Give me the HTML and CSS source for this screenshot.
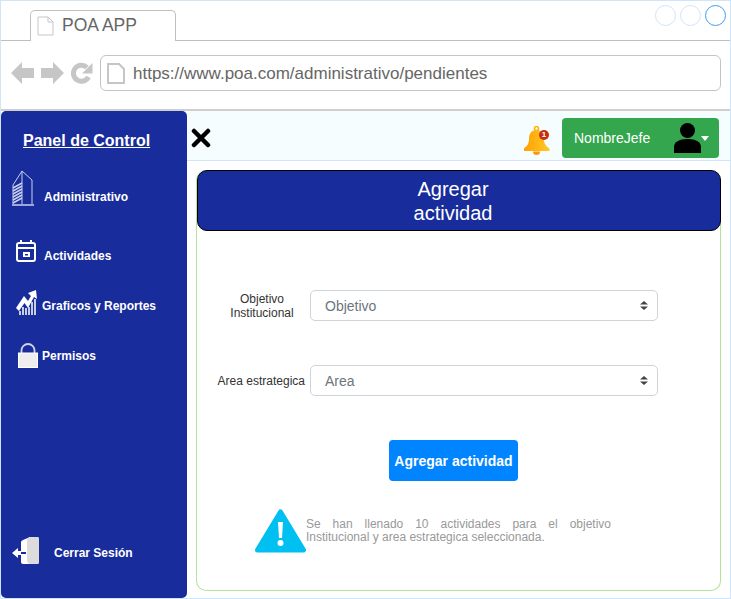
FILE: index.html
```html
<!DOCTYPE html>
<html lang="en">
<head>
    <meta charset="UTF-8">
    <meta name="viewport" content="width=device-width, initial-scale=1.0">
    <link rel="stylesheet" href="styles.css">
    <title>POA APP</title>
</head>
<body>
    <div class="window">
        <!-- Browser frame -->
        <div class="tab-strip">
            <div class="tab">
                <svg class="doc-icon" width="17" height="20" viewBox="0 0 17 20"><path d="M1 1H11L16 6V19H1Z M11 1V6H16" fill="#fff" stroke="#c6c6c6" stroke-width="1"/></svg>
                <span>POA APP</span>
            </div>
            <div class="circles">
                <span class="circle"></span>
                <span class="circle"></span>
                <span class="circle active"></span>
            </div>
        </div>
        <div class="address-row">
            <div class="nav-icons">
                <svg width="23" height="24" viewBox="0 0 23 24"><path d="M0 12L11 1V7H23V17H11V23Z" fill="#c6c6c6"/></svg>
                <svg width="23" height="24" viewBox="0 0 23 24"><path d="M23 12L12 1V7H0V17H12V23Z" fill="#c6c6c6"/></svg>
                <svg width="22" height="22" viewBox="0 0 22 22"><path d="M17.500 15A8 8 0 1 1 16 5.500" fill="none" stroke="#c6c6c6" stroke-width="5"/><path d="M21.500 1V11.500H11Z" fill="#c6c6c6"/></svg>
            </div>
            <div class="address-box">
                <svg width="18" height="21" viewBox="0 0 18 21"><path d="M1 1H12L17 6V20H1Z" fill="#fff" stroke="#c6c6c6" stroke-width="2"/></svg>
                <span>https://www.poa.com/administrativo/pendientes</span>
            </div>
        </div>

        <div class="app">
            <!-- Side menu -->
            <div class="sidebar">
                <div class="panel-title">Panel de Control</div>
                <div class="menu-item item-admin">
                    <svg width="24" height="36" viewBox="0 0 24 36" fill="none" stroke="#c9d0ee" stroke-width="1">
                        <path d="M2 15L11 1L21 10V34"/>
                        <path d="M2 15V34M11 1V34"/>
                        <path d="M2 18L11 13M2 21L11 16M2 24L11 19M2 27L11 22M2 30L11 25M2 33L11 28" stroke-width="1.500"/>
                        <path d="M1 35H23" stroke-width="1.500"/>
                    </svg>
                    <span>Administrativo</span>
                </div>
                <div class="menu-item item-activities">
                    <svg width="22" height="23" viewBox="0 0 22 23" fill="none" stroke="#fff" stroke-width="2">
                        <rect x="2" y="3" width="18" height="18" rx="2"/>
                        <path d="M2 8H20M6 0V4M16 0V4"/>
                        <rect x="8" y="12" width="7" height="5" fill="#fff" stroke="none"/>
                        <rect x="10" y="14" width="3" height="1.500" fill="#182c9b" stroke="none"/>
                    </svg>
                    <span>Actividades</span>
                </div>
                <div class="menu-item item-reports">
                    <svg width="21" height="26" viewBox="0 0 21 26">
                        <path d="M0 18L8 6L12 11L15 6L12 3L20 0L21 9L18 7L12 18L8.500 13L3 21Z" fill="#fff"/>
                        <path d="M4 25V21M7 25V17M10 25V18M13 25V17M16 25V12M19 25V9" stroke="#fff" stroke-width="1.500"/>
                    </svg>
                    <span>Graficos y Reportes</span>
                </div>
                <div class="menu-item item-permisos">
                    <svg width="20" height="25" viewBox="0 0 20 25">
                        <path d="M3.500 11V7.500A6.500 6.500 0 0 1 16.500 7.500V11" fill="none" stroke="#cfd3e6" stroke-width="1.800"/>
                        <rect x="0.500" y="10" width="19" height="14.500" fill="#eee" stroke="#fff" stroke-width="1"/>
                    </svg>
                    <span>Permisos</span>
                </div>
                <div class="menu-item item-logout">
                    <svg width="28" height="27" viewBox="0 0 28 27">
                        <path d="M10 5Q10 4 12 3L19 0H26Q28 0 28 2V25Q28 27 26 27H12Q10 27 10 25Z" fill="#fff"/>
                        <path d="M16 3Q17 0 20 0H26Q28 0 28 2V25Q28 27 26 27H19Q16 26 16 23Z" fill="#dcdcdc"/>
                        <path d="M1 16L7 11V14H10V18H7V21Z" fill="#fff"/>
                        <path d="M10 16H15" stroke="#182c9b" stroke-width="2"/>
                    </svg>
                    <span>Cerrar Sesión</span>
                </div>
            </div>

            <div class="main">
                <div class="topbar">
                    <svg class="close-icon" width="20" height="20" viewBox="0 0 20 20"><path d="M3 3L17 17M17 3L3 17" stroke="#000" stroke-width="4.500" stroke-linecap="round"/></svg>
                    <div class="bell">
                        <svg width="28" height="29" viewBox="0 0 28 29">
                            <defs>
                                <linearGradient id="bellFill" x1="0" y1="0" x2="1" y2="0">
                                    <stop offset="0" stop-color="#ffa000"/>
                                    <stop offset="1" stop-color="#ffca28"/>
                                </linearGradient>
                            </defs>
                            <circle cx="13.500" cy="2.500" r="2" fill="none" stroke="#ffb300" stroke-width="1.500"/>
                            <path d="M13.500 4C8 4 6 8 6 13C6 18 4 20 1 22.500V25H26.500V22.500C23 20 21 18 21 13C21 8 19 4 13.500 4Z" fill="url(#bellFill)"/>
                            <path d="M10 25.500A3.500 3.500 0 0 0 17 25.500Z" fill="#ff9800"/>
                        </svg>
                        <span class="bell-badge">1</span>
                    </div>
                    <div class="user-btn">
                        <span class="user-name">NombreJefe</span>
                        <svg width="27" height="30" viewBox="0 0 27 30"><circle cx="13.500" cy="7.500" r="7.500" fill="#000"/><path d="M0 30V24C0 19 5 16 13.500 16C22 16 27 19 27 24V30Z" fill="#000"/></svg>
                        <span class="caret"></span>
                    </div>
                </div>

                <div class="content">
                    <div class="card">
                        <div class="card-title">Agregar<br>actividad</div>
                        <div class="form-row row-first">
                            <label class="form-label">Objetivo Institucional</label>
                            <div class="select">
                                <span>Objetivo</span>
                                <svg width="8" height="9" viewBox="0 0 8 9"><path d="M4 0L8 3.500H0ZM4 9L0 5.500H8Z" fill="#444"/></svg>
                            </div>
                        </div>
                        <div class="form-row row-second">
                            <label class="form-label">Area estrategica</label>
                            <div class="select">
                                <span>Area</span>
                                <svg width="8" height="9" viewBox="0 0 8 9"><path d="M4 0L8 3.500H0ZM4 9L0 5.500H8Z" fill="#444"/></svg>
                            </div>
                        </div>
                        <div class="actions">
                            <button class="add-btn">Agregar actividad</button>
                        </div>
                        <div class="warning">
                            <svg width="51" height="44" viewBox="0 0 51 44">
                                <path d="M25.500 3L48.500 41H2.500Z" fill="#00c0f2" stroke="#00c0f2" stroke-width="5" stroke-linejoin="round"/>
                                <path d="M23 13H28L27 29H24Z" fill="#fff"/>
                                <circle cx="25.500" cy="34" r="3" fill="#fff"/>
                            </svg>
                            <p>Se han llenado 10 actividades para el objetivo Institucional y area estrategica seleccionada.</p>
                        </div>
                    </div>
                </div>
            </div>
        </div>
    </div>
</body>
</html>
```

FILE: styles.css
```css
* {
    box-sizing: border-box;
}

body {
    margin: 0;
    font-family: 'Liberation Sans', Arial, sans-serif;
    background-color: #fff;
}

.window {
    width: 731px;
    height: 599px;
    border: 1px solid #cfe5fb;
    display: flex;
    flex-direction: column;
    overflow: hidden;
}

/* Browser frame */
.tab-strip {
    height: 40px;
    flex-shrink: 0;
    display: flex;
    justify-content: space-between;
    padding: 4px 4px 0 29px;
    border-bottom: 1px solid #bfbfbf;
}

.tab {
    width: 146px;
    height: 31px;
    margin-top: 5px;
    display: flex;
    align-items: center;
    gap: 8px;
    padding-left: 6px;
    padding-bottom: 1px;
    background-color: #fff;
    border: 1px solid #bfbfbf;
    border-bottom: none;
    border-radius: 5px 5px 0 0;
    font-size: 17.500px;
    color: #666;
}

.circles {
    display: flex;
    gap: 4px;
}

.circle {
    width: 21px;
    height: 21px;
    border-radius: 50%;
    border: 1px solid #cfe5fb;
}

.circle.active {
    border-color: #3f9bf0;
}

.address-row {
    height: 70px;
    flex-shrink: 0;
    display: flex;
    align-items: center;
    padding: 0 9px 4px 10px;
    border-bottom: 2px solid #cfcfcf;
}

.nav-icons {
    width: 89px;
    display: flex;
    align-items: center;
    gap: 7px;
}

.address-box {
    flex: 1;
    height: 36px;
    display: flex;
    align-items: center;
    gap: 8px;
    padding-left: 6px;
    border: 1px solid #c4c4c4;
    border-radius: 6px;
    font-size: 17px;
    color: #666;
}

.address-box span {
    margin-top: 1px;
}

/* App */
.app {
    flex: 1;
    display: flex;
    min-height: 0;
}

.sidebar {
    width: 186px;
    flex-shrink: 0;
    display: flex;
    flex-direction: column;
    padding-bottom: 34px;
    background-color: #182c9b;
    border-radius: 5px;
    color: #fff;
}

.panel-title {
    height: 59px;
    padding: 21px 0 0 22px;
    font-size: 16px;
    font-weight: bold;
    line-height: 18px;
    text-decoration: underline;
}

.menu-item {
    display: flex;
    align-items: center;
    font-size: 12px;
    font-weight: bold;
}

.item-admin {
    padding-left: 10px;
    gap: 9px;
}

.item-admin span {
    margin-top: 18px;
}

.item-activities {
    margin-top: 34px;
    padding-left: 14px;
    gap: 7px;
}

.item-activities span {
    margin-top: 8px;
}

.item-reports {
    margin-top: 27px;
    padding-left: 15px;
    gap: 5px;
}

.item-reports span {
    margin-top: 5px;
}

.item-permisos {
    margin-top: 27px;
    padding-left: 17px;
    gap: 4px;
}

.item-logout {
    margin-top: auto;
    padding-left: 10px;
    gap: 15px;
}

.item-logout span {
    margin-top: 4px;
}

.main {
    flex: 1;
    display: flex;
    flex-direction: column;
    min-width: 0;
}

.topbar {
    height: 50px;
    flex-shrink: 0;
    display: flex;
    align-items: center;
    padding: 5px 11px 0 4px;
    background-color: #f5fdff;
    border-bottom: 1px solid #cfe5fb;
}

.bell {
    position: relative;
    width: 28px;
    height: 29px;
    margin: 4px 11px 0 auto;
}

.bell-badge {
    position: absolute;
    top: 4px;
    right: 2px;
    width: 10px;
    height: 10px;
    border-radius: 50%;
    background-color: #c62f12;
    color: #fff;
    font-size: 8px;
    font-weight: bold;
    line-height: 10px;
    text-align: center;
}

.user-btn {
    position: relative;
    width: 157px;
    height: 40px;
    display: flex;
    align-items: center;
    padding-left: 12px;
    background-color: #34a64e;
    border-radius: 4px;
}

.user-name {
    width: 100px;
    font-size: 14px;
    color: #fff;
}

.caret {
    border-left: 4.500px solid transparent;
    border-right: 4.500px solid transparent;
    border-top: 5px solid #fff;
}

.content {
    flex: 1;
    padding: 9px 9px 7px 9px;
    min-height: 0;
}

.card {
    height: 100%;
    border: 1px solid #b5e29c;
    border-top: none;
    border-radius: 10px;
}

.card-title {
    height: 61px;
    margin: 0 -1px 0 0;
    padding: 6px 12px 0 0;
    background-color: #182c9b;
    border: 1px solid #000;
    border-radius: 10px;
    color: #fff;
    font-size: 20px;
    line-height: 24px;
    text-align: center;
}

.form-row {
    display: flex;
    align-items: center;
}

.row-first {
    margin-top: 59px;
}

.row-second {
    margin-top: 44px;
}

.form-label {
    width: 113px;
    padding: 0 4px 0 21px;
    font-size: 12px;
    line-height: 14px;
    color: #333;
    text-align: center;
}

.row-second .form-label {
    padding: 0 5px 0 0;
    white-space: nowrap;
    text-align: right;
}

.select {
    width: 348px;
    height: 31px;
    display: flex;
    align-items: center;
    justify-content: space-between;
    padding: 0 9px 0 14px;
    border: 1px solid #ced4da;
    border-radius: 5px;
    font-size: 14px;
    color: #6c757d;
}

.actions {
    margin-top: 44px;
    padding-left: 192px;
}

.add-btn {
    width: 129px;
    height: 41px;
    padding: 0;
    border: none;
    border-radius: 4px;
    background-color: #0084ff;
    color: #fff;
    font-family: inherit;
    font-size: 14px;
    font-weight: bold;
}

.warning {
    display: flex;
    margin-top: 28px;
    padding-left: 58px;
}

.warning p {
    width: 305px;
    margin: 9px 0 0 0;
    font-size: 12px;
    line-height: 13px;
    color: #999;
    text-align: justify;
}
```
